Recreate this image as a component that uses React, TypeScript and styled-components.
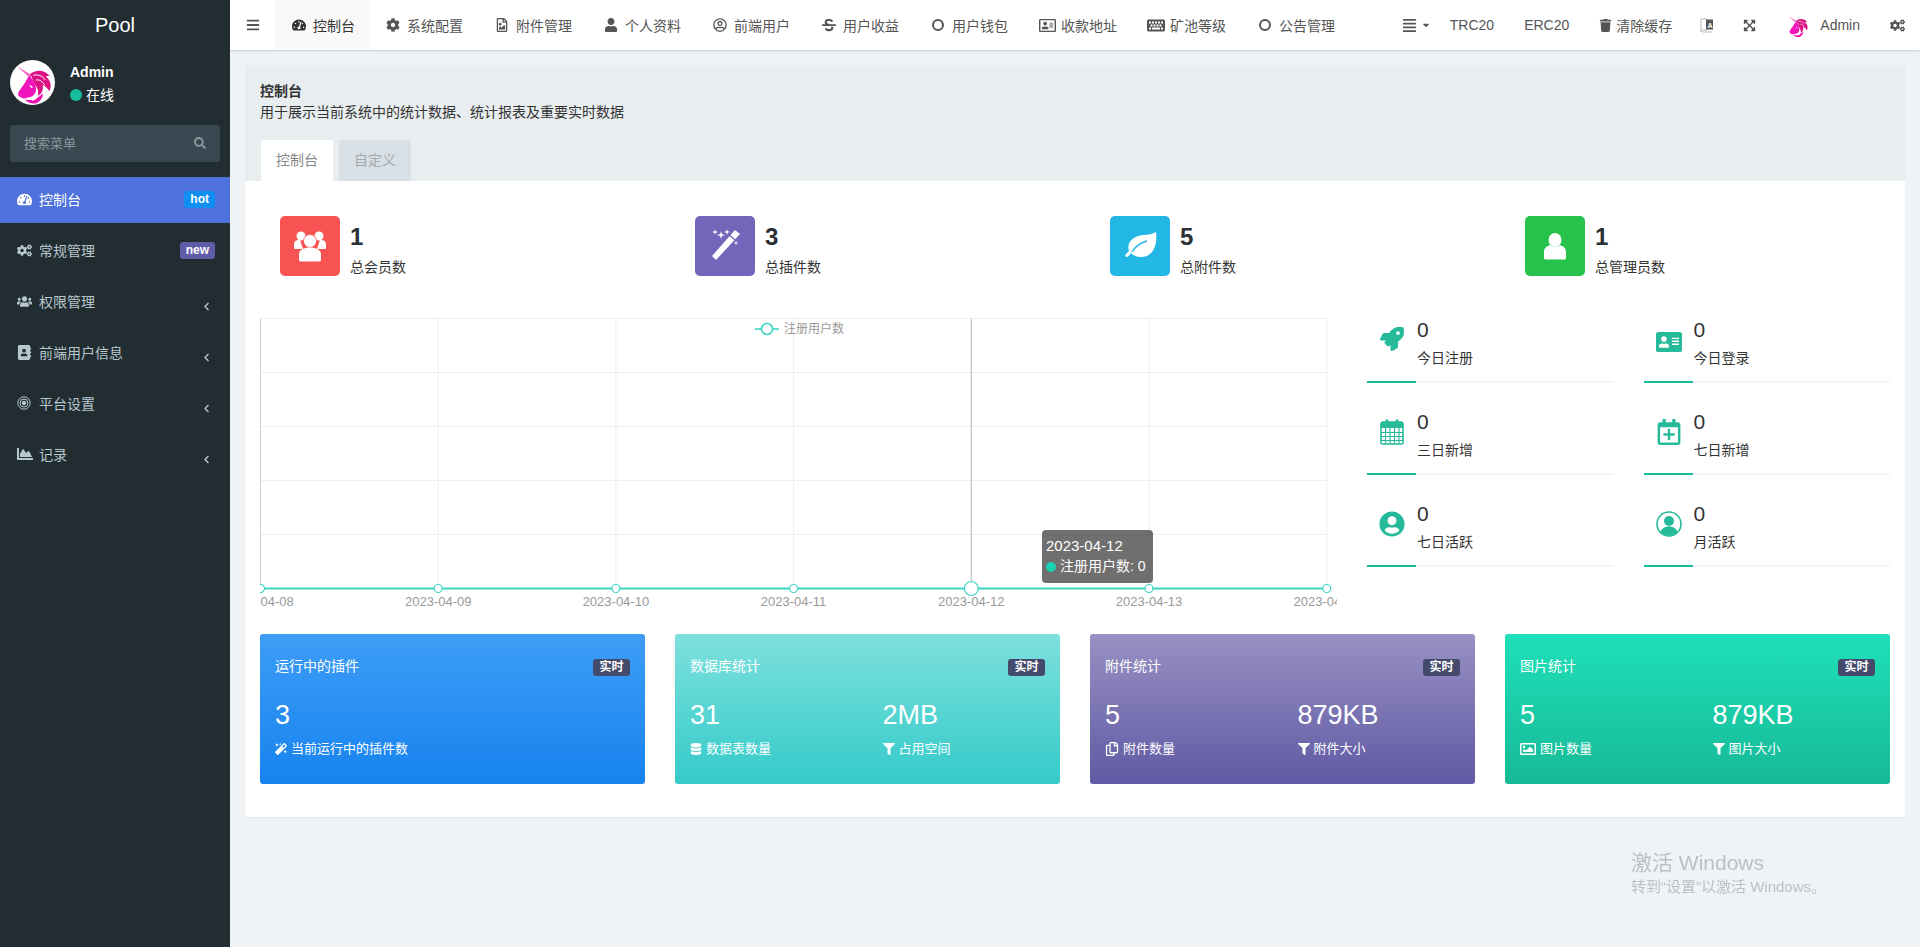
import React from "react";
import styled, { createGlobalStyle } from "styled-components";
import {
  FaAddressBook,
  FaAddressCard,
  FaAlignJustify,
  FaBars,
  FaCaretDown,
  FaChartArea,
  FaChevronLeft,
  FaCog,
  FaCogs,
  FaDatabase,
  FaExpandArrowsAlt,
  FaFilter,
  FaKeyboard,
  FaMagic,
  FaRegAddressCard,
  FaRegCalendarPlus,
  FaRegCopy,
  FaRegFileImage,
  FaRegImage,
  FaRegUserCircle,
  FaRocket,
  FaSearch,
  FaStrikethrough,
  FaTachometerAlt,
  FaTrash,
  FaUser,
  FaUserCircle,
  FaUsers,
} from "react-icons/fa";

const FONT = `"Liberation Sans", "Noto Sans CJK SC", sans-serif`;

const GlobalStyle = createGlobalStyle`
  html, body {
    margin: 0;
    padding: 0;
    height: 100%;
  }
  body {
    background: #f0f3f6;
    font-family: ${FONT};
    font-size: 14px;
    color: #333;
  }
  * {
    box-sizing: border-box;
  }
`;

const Unicorn: React.FC<{ size: number }> = ({ size }) => (
  <svg width={size} height={size} viewBox="0 0 135 135">
    <path d="M20 18 L66 46 L60 54 Z" fill="#f26bc7" />
    <path
      d="M60 42 C76 30 100 26 122 50 C118 46 112 46 108 50 C122 60 126 78 118 94 C112 84 106 78 98 76 C102 92 92 104 84 108 C86 96 84 84 76 76 C70 64 66 52 60 42 Z"
      fill="#dc1184"
    />
    <path d="M70 46 C84 42 98 48 106 60 M78 60 C88 58 98 64 104 76" fill="none" stroke="#fff" strokeWidth="3" />
    <path
      d="M58 48 C68 56 78 72 78 88 C78 100 70 110 58 112 C48 114 40 118 32 112 C24 108 22 100 28 92 C34 84 38 78 44 70 C48 62 52 54 58 48 Z"
      fill="#f014bd"
    />
    <path d="M58 74 C63 76 67 79 69 84 C64 84 60 81 58 74 Z" fill="#fff" />
    <path
      d="M44 118 C58 124 84 118 98 100 C100 112 92 124 78 130 C66 132 52 128 44 118 Z"
      fill="#ec12b2"
    />
    <path d="M62 118 C70 116 78 112 84 108 C82 116 76 120 68 122 Z" fill="#fff" />
  </svg>
);

const BigUsers = () => (
  <svg width="32" height="31" viewBox="0 0 32 31" fill="#fff">
    <circle cx="7" cy="5" r="4.5" />
    <circle cx="25" cy="5" r="4.5" />
    <path d="M0 13 C0 9.5 3 8.5 6 9 L9 18 H1 Q0 18 0 16.5 Z" />
    <path d="M32 13 C32 9.5 29 8.5 26 9 L23 18 H31 Q32 18 32 16.5 Z" />
    <circle cx="16" cy="10" r="6.5" stroke="#f75353" strokeWidth="0.8" />
    <path d="M5 29 V23 C5 19 10 16.5 16 16.5 C22 16.5 27 19 27 23 V29 Q27 30.5 25 30.5 H7 Q5 30.5 5 29 Z" />
  </svg>
);

const BigUser = () => (
  <svg width="22" height="27" viewBox="0 0 22 27" fill="#fff">
    <ellipse cx="11" cy="7" rx="6.5" ry="7" />
    <path d="M0 25 V19 C0 15 3 13 6 12 C8 14.5 14 14.5 16 12 C19 13 22 15 22 19 V25 Q22 26.5 20 26.5 H2 Q0 26.5 0 25 Z" />
  </svg>
);

const sparkle = (x: number, y: number, r: number) =>
  `M${x} ${y - r} L${x + r * 0.22} ${y - r * 0.22} L${x + r} ${y} L${x + r * 0.22} ${y + r * 0.22} L${x} ${y + r} L${x - r * 0.22} ${y + r * 0.22} L${x - r} ${y} L${x - r * 0.22} ${y - r * 0.22} Z`;

const BigMagic = () => (
  <svg width="60" height="60" viewBox="0 0 60 60">
    <path d="M40 14 L45 18 L21 44 L17 40 Z" fill="#fff" />
    <path d="M35 19.5 L40 24" stroke="#7266ba" strokeWidth="1.2" />
    <path
      d={`${sparkle(20, 16, 3)} ${sparkle(26, 19, 4)} ${sparkle(32, 16, 3)} ${sparkle(41, 27, 2.5)}`}
      fill="#fff"
    />
  </svg>
);

const BigLeaf = () => (
  <svg width="60" height="60" viewBox="0 0 60 60">
    <path
      d="M46 16 C48 30 42 42 30 41 C26 41 23 39 21 37 C19 40 18 41 17 41 C15 41 15 39 16 38 L19 35 C16 26 24 20 33 19 C38 19 43 18 46 16 Z"
      fill="#fff"
    />
    <path d="M22 36 C25 31 30 27 37 25" fill="none" stroke="#23b7e5" strokeWidth="1.4" />
  </svg>
);

const RingsIcon = () => (
  <svg width="14" height="14" viewBox="0 0 14 14" fill="none" stroke="currentColor">
    <circle cx="7" cy="7" r="6.2" />
    <circle cx="7" cy="7" r="4" />
    <circle cx="7" cy="7" r="1.8" fill="currentColor" />
  </svg>
);

const CalendarGrid = () => (
  <svg width="24" height="26" viewBox="0 0 24 26" fill="none" stroke="currentColor">
    <path d="M1 5 Q1 3 3 3 H21 Q23 3 23 5 V24 Q23 25 21 25 H3 Q1 25 1 24 Z" strokeWidth="1.6" />
    <path d="M1 3 H23 V9 H1 Z" fill="currentColor" stroke="none" />
    <path d="M7 0.5 V5 M17 0.5 V5" stroke="currentColor" strokeWidth="2.6" />
    <path d="M1 13.5 H23 M1 17.5 H23 M1 21.5 H23 M5.5 9 V25 M10 9 V25 M14.5 9 V25 M19 9 V25" strokeWidth="1.1" />
  </svg>
);

const UserRing = () => (
  <svg width="26" height="26" viewBox="0 0 26 26">
    <circle cx="13" cy="13" r="12" fill="#fff" stroke="currentColor" strokeWidth="1.6" />
    <circle cx="13" cy="10" r="5" fill="currentColor" />
    <path d="M4.5 21 C6 17 9 15.5 13 15.5 C17 15.5 20 17 21.5 21 C19 23.5 16 24.5 13 24.5 C10 24.5 7 23.5 4.5 21 Z" fill="currentColor" />
  </svg>
);

type SideItem = {
  label: string;
  icon: React.ReactNode;
  active?: boolean;
  badge?: { text: string; color: string };
};

const sideItems: SideItem[] = [
  { label: "控制台", icon: <FaTachometerAlt />, active: true, badge: { text: "hot", color: "#0f8ff2" } },
  { label: "常规管理", icon: <FaCogs />, badge: { text: "new", color: "#605ca8" } },
  { label: "权限管理", icon: <FaUsers /> },
  { label: "前端用户信息", icon: <FaAddressBook /> },
  { label: "平台设置", icon: <RingsIcon /> },
  { label: "记录", icon: <FaChartArea size={16} /> },
];

const navItems: { label: string; icon: React.ReactNode; active?: boolean }[] = [
  { label: "控制台", icon: <FaTachometerAlt />, active: true },
  { label: "系统配置", icon: <FaCog /> },
  { label: "附件管理", icon: <FaRegFileImage /> },
  { label: "个人资料", icon: <FaUser /> },
  { label: "前端用户", icon: <FaRegUserCircle /> },
  { label: "用户收益", icon: <FaStrikethrough /> },
  { label: "用户钱包", icon: <NavRingIcon /> },
  { label: "收款地址", icon: <FaRegAddressCard size={17} /> },
  { label: "矿池等级", icon: <FaKeyboard size={19} /> },
  { label: "公告管理", icon: <NavRingIcon /> },
];

const topStats = [
  { value: "1", label: "总会员数", color: "#f75353", icon: <BigUsers /> },
  { value: "3", label: "总插件数", color: "#7266ba", icon: <BigMagic /> },
  { value: "5", label: "总附件数", color: "#23b7e5", icon: <BigLeaf /> },
  { value: "1", label: "总管理员数", color: "#27c24c", icon: <BigUser /> },
];

const sideStats = [
  { label: "今日注册", icon: <FaRocket size={24} /> },
  { label: "今日登录", icon: <FaAddressCard size={30} /> },
  { label: "三日新增", icon: <CalendarGrid /> },
  { label: "七日新增", icon: <FaRegCalendarPlus size={26} /> },
  { label: "七日活跃", icon: <FaUserCircle size={26} /> },
  { label: "月活跃", icon: <UserRing /> },
];

type Metric = { value: string; label: string; icon: React.ReactNode };

const cards: { title: string; from: string; to: string; metrics: Metric[] }[] = [
  {
    title: "运行中的插件",
    from: "#3d9df6",
    to: "#1783ef",
    metrics: [{ value: "3", label: "当前运行中的插件数", icon: <FaMagic size={12} /> }],
  },
  {
    title: "数据库统计",
    from: "#7de0dd",
    to: "#34cbc9",
    metrics: [
      { value: "31", label: "数据表数量", icon: <FaDatabase size={12} /> },
      { value: "2MB", label: "占用空间", icon: <FaFilter size={12} /> },
    ],
  },
  {
    title: "附件统计",
    from: "#9891c3",
    to: "#6059a4",
    metrics: [
      { value: "5", label: "附件数量", icon: <FaRegCopy size={14} /> },
      { value: "879KB", label: "附件大小", icon: <FaFilter size={12} /> },
    ],
  },
  {
    title: "图片统计",
    from: "#1fe0b9",
    to: "#17b996",
    metrics: [
      { value: "5", label: "图片数量", icon: <FaRegImage size={16} /> },
      { value: "879KB", label: "图片大小", icon: <FaFilter size={12} /> },
    ],
  },
];

const chartDates = ["2023-04-08", "2023-04-09", "2023-04-10", "2023-04-11", "2023-04-12", "2023-04-13", "2023-04-14"];
const STEP = 177.7;
const BASE_Y = 279.5;
const TOP_Y = 9.5;
const ACTIVE_INDEX = 4;

const Chart = () => {
  const xs = chartDates.map((_, i) => 0.5 + i * STEP);
  const ys = [0, 1, 2, 3, 4, 5].map((i) => TOP_Y + i * 54);
  return (
    <ChartBox>
      <svg width="1077" height="310">
        {ys.map((y) => (
          <line key={y} x1="0" x2={xs[6]} y1={y} y2={y} stroke="#eee" />
        ))}
        {xs.map((x) => (
          <line key={x} x1={x} x2={x} y1={TOP_Y} y2={BASE_Y} stroke="#eee" />
        ))}
        <line x1="0.5" x2="0.5" y1={TOP_Y} y2={BASE_Y} stroke="#ccc" />
        <line x1={xs[ACTIVE_INDEX]} x2={xs[ACTIVE_INDEX]} y1={TOP_Y} y2={BASE_Y} stroke="#bbb" />
        <line x1="495" x2="519" y1="20" y2="20" stroke="#2fd3bc" strokeWidth="1.5" />
        <circle cx="507" cy="20" r="5.5" fill="#fff" stroke="#2fd3bc" strokeWidth="1.5" />
        <text x="524" y="24" fontSize="12" fill="#999">
          注册用户数
        </text>
        <line x1="0" x2={xs[6]} y1={BASE_Y} y2={BASE_Y} stroke="#3dd5c0" strokeWidth="2" />
        {xs.map((x, i) => (
          <circle
            key={x}
            cx={x}
            cy={BASE_Y}
            r={i === ACTIVE_INDEX ? 7 : 4}
            fill="#fff"
            stroke="#3dd5c0"
            strokeWidth="1.2"
          />
        ))}
        {chartDates.map((d, i) => (
          <text key={d} x={xs[i]} y="297" fontSize="13" fill="#999" textAnchor="middle">
            {d}
          </text>
        ))}
      </svg>
      <ChartTip>
        <ChartTipDate>2023-04-12</ChartTipDate>
        <ChartTipRow>
          <ChartTipDot />
          注册用户数: 0
        </ChartTipRow>
      </ChartTip>
    </ChartBox>
  );
};

const App: React.FC = () => {
  return (
    <Page>
      <GlobalStyle />
      <Sidebar>
        <Logo>Pool</Logo>
        <UserPanel>
          <Avatar>
            <Unicorn size={45} />
          </Avatar>
          <UserInfo>
            <UserName>Admin</UserName>
            <UserStatus>
              <StatusDot />
              在线
            </UserStatus>
          </UserInfo>
        </UserPanel>
        <SearchBox>
          <span>搜索菜单</span>
          <FaSearch size={12} />
        </SearchBox>
        <SideMenu>
          {sideItems.map((item) => (
            <SideRow key={item.label} $active={item.active}>
              <SideIcon>{item.icon}</SideIcon>
              <SideLabel>{item.label}</SideLabel>
              {item.badge ? (
                <SideBadge $color={item.badge.color}>{item.badge.text}</SideBadge>
              ) : (
                <SideArrow>
                  <FaChevronLeft size={9} />
                </SideArrow>
              )}
            </SideRow>
          ))}
        </SideMenu>
      </Sidebar>
      <Main>
        <Header>
          <ToggleButton>
            <FaBars size={14} />
          </ToggleButton>
          {navItems.map((item) => (
            <NavItem key={item.label} $active={item.active}>
              <NavIcon>{item.icon}</NavIcon>
              {item.label}
            </NavItem>
          ))}
          <HeaderRight>
            <ListButton>
              <FaAlignJustify size={15} />
              <FaCaretDown size={10} />
            </ListButton>
            <HeaderLink>TRC20</HeaderLink>
            <HeaderLink>ERC20</HeaderLink>
            <CacheLink>
              <FaTrash size={13} />
              清除缓存
            </CacheLink>
            <HeaderIcon>
              <svg width="14" height="17" viewBox="0 0 14 17">
                <path d="M1 2 H7 V13 H3 L1 15 Z" fill="#fff" stroke="#b5b5b5" />
                <rect x="6" y="2.5" width="7" height="10" fill="#555" />
                <path d="M2.5 15 H12" stroke="#bbb" />
                <text x="7.5" y="10.5" fontSize="7" fontWeight="bold" fill="#fff">
                  A
                </text>
              </svg>
            </HeaderIcon>
            <HeaderIcon>
              <FaExpandArrowsAlt size={13} />
            </HeaderIcon>
            <HeaderUser>
              <Unicorn size={25} />
              Admin
            </HeaderUser>
            <HeaderIcon $wide>
              <FaCogs size={15} />
            </HeaderIcon>
          </HeaderRight>
        </Header>
        <Content>
          <Panel>
            <PanelHead>
              <PanelTitle>控制台</PanelTitle>
              <PanelDesc>用于展示当前系统中的统计数据、统计报表及重要实时数据</PanelDesc>
              <Tabs>
                <Tab $active>控制台</Tab>
                <Tab>自定义</Tab>
              </Tabs>
            </PanelHead>
            <PanelBody>
              <TopStats>
                {topStats.map((s) => (
                  <TopStat key={s.label}>
                    <TopStatIcon $color={s.color}>{s.icon}</TopStatIcon>
                    <div>
                      <TopStatValue>{s.value}</TopStatValue>
                      <TopStatLabel>{s.label}</TopStatLabel>
                    </div>
                  </TopStat>
                ))}
              </TopStats>
              <ChartRow>
                <Chart />
                <SideStats>
                  {sideStats.map((s) => (
                    <SideStat key={s.label}>
                      <SideStatMain>
                        <SideStatIcon>{s.icon}</SideStatIcon>
                        <div>
                          <SideStatValue>0</SideStatValue>
                          <SideStatLabel>{s.label}</SideStatLabel>
                        </div>
                      </SideStatMain>
                      <SideStatBar>
                        <SideStatBarFill />
                      </SideStatBar>
                    </SideStat>
                  ))}
                </SideStats>
              </ChartRow>
              <CardGrid>
                {cards.map((c) => (
                  <Card key={c.title} $from={c.from} $to={c.to}>
                    <CardHead>
                      <CardTitle>{c.title}</CardTitle>
                      <CardBadge>实时</CardBadge>
                    </CardHead>
                    <CardMetrics>
                      {c.metrics.map((m) => (
                        <div key={m.label}>
                          <CardValue>{m.value}</CardValue>
                          <CardLabel>
                            {m.icon}
                            {m.label}
                          </CardLabel>
                        </div>
                      ))}
                    </CardMetrics>
                  </Card>
                ))}
              </CardGrid>
            </PanelBody>
          </Panel>
        </Content>
      </Main>
      <Watermark>
        <WatermarkTitle>激活 Windows</WatermarkTitle>
        <WatermarkText>转到“设置”以激活 Windows。</WatermarkText>
      </Watermark>
    </Page>
  );
};

function NavRingIcon() {
  return <NavRing />;
}

const NavRing = styled.i`
  display: block;
  width: 12px;
  height: 12px;
  border: 2.5px solid #555;
  border-radius: 50%;
`;

const Page = styled.div`
  display: flex;
  height: 947px;
  overflow: hidden;
`;

const Sidebar = styled.aside`
  width: 230px;
  flex-shrink: 0;
  background: #222d32;
`;

const Logo = styled.div`
  height: 50px;
  line-height: 50px;
  text-align: center;
  font-size: 20px;
  color: #fff;
`;

const UserPanel = styled.div`
  display: flex;
  padding: 10px;
  gap: 15px;
`;

const Avatar = styled.div`
  width: 45px;
  height: 45px;
  border-radius: 50%;
  background: #fff;
  overflow: hidden;
`;

const UserInfo = styled.div`
  color: #fff;
  padding-top: 3px;
`;

const UserName = styled.div`
  font-weight: 700;
  font-size: 14px;
  line-height: 18px;
`;

const UserStatus = styled.div`
  display: flex;
  align-items: center;
  gap: 4px;
  margin-top: 5px;
  line-height: 18px;
  font-size: 14px;
`;

const StatusDot = styled.i`
  display: block;
  width: 12px;
  height: 12px;
  border-radius: 50%;
  background: #18bc9c;
`;

const SearchBox = styled.div`
  display: flex;
  align-items: center;
  justify-content: space-between;
  height: 37px;
  margin: 10px 10px 15px;
  padding: 0 14px 2px;
  border-radius: 3px;
  background: #374850;
  color: #8b979d;
  font-size: 13px;
`;

const SideMenu = styled.nav`
  display: flex;
  flex-direction: column;
  gap: 5px;
`;

const SideRow = styled.div<{ $active?: boolean }>`
  display: flex;
  align-items: center;
  height: 46px;
  padding: 0 15px 2px 17px;
  color: ${({ $active }) => ($active ? "#fff" : "#b8c7ce")};
  background: ${({ $active }) => ($active ? "#4e71dd" : "transparent")};
`;

const SideIcon = styled.span`
  display: flex;
  width: 22px;
  font-size: 15px;
`;

const SideLabel = styled.span`
  flex: 1;
  font-size: 14px;
`;

const SideBadge = styled.span<{ $color: string }>`
  height: 17px;
  line-height: 16px;
  padding: 0 6px;
  border-radius: 3px;
  font-size: 12px;
  font-weight: 700;
  color: #fff;
  background: ${({ $color }) => $color};
`;

const SideArrow = styled.span`
  display: flex;
  margin: 11px 4px 0 0;
`;

const Main = styled.div`
  flex: 1;
  min-width: 0;
  display: flex;
  flex-direction: column;
`;

const Header = styled.header`
  display: flex;
  align-items: stretch;
  height: 50px;
  flex-shrink: 0;
  background: #fff;
  box-shadow: 0 1px 2px rgba(0, 0, 0, 0.16);
  color: #555;
  font-size: 14px;
  white-space: nowrap;
`;

const ToggleButton = styled.div`
  display: flex;
  align-items: center;
  justify-content: center;
  width: 45px;
`;

const NavItem = styled.div<{ $active?: boolean }>`
  display: flex;
  align-items: center;
  padding: ${({ $active }) => ($active ? "0 14px 0 15px" : "0 15px")};
  color: ${({ $active }) => ($active ? "#333" : "#555")};
  background: ${({ $active }) => ($active ? "#f9f9f9" : "transparent")};
`;

const NavIcon = styled.span`
  display: flex;
  justify-content: center;
  width: 18px;
  margin-right: 5px;
  font-size: 14px;
`;

const HeaderRight = styled.div`
  display: flex;
  align-items: center;
  margin-left: auto;
`;

const ListButton = styled.div`
  display: flex;
  align-items: center;
  gap: 4px;
  padding-right: 4px;
`;

const HeaderLink = styled.div`
  padding: 0 15px;
`;

const CacheLink = styled.div`
  display: flex;
  align-items: center;
  gap: 4px;
  padding: 0 14px 0 15px;
`;

const HeaderIcon = styled.div<{ $wide?: boolean }>`
  display: flex;
  align-items: center;
  justify-content: center;
  width: ${({ $wide }) => ($wide ? "46px" : "42px")};
`;

const HeaderUser = styled.div`
  display: flex;
  align-items: center;
  gap: 10px;
  margin-left: 15px;
  margin-right: 14px;
`;

const Content = styled.main`
  padding: 15px;
`;

const Panel = styled.section`
  border-radius: 3px;
  background: #fff;
  box-shadow: 0 1px 1px rgba(0, 0, 0, 0.05);
`;

const PanelHead = styled.div`
  height: 116px;
  padding: 16px 15px 0;
  background: #e8edf0;
`;

const PanelTitle = styled.div`
  font-weight: 700;
  font-size: 14px;
  line-height: 20px;
`;

const PanelDesc = styled.div`
  font-size: 14px;
  line-height: 22px;
`;

const Tabs = styled.div`
  display: flex;
  gap: 6px;
  margin: 17px 0 0 1px;
`;

const Tab = styled.div<{ $active?: boolean }>`
  width: 72px;
  height: 41px;
  line-height: 41px;
  text-align: center;
  border-radius: 3px 3px 0 0;
  font-size: 14px;
  color: ${({ $active }) => ($active ? "#888" : "#a3abb1")};
  background: ${({ $active }) => ($active ? "#fff" : "#d8dfe5")};
`;

const PanelBody = styled.div`
  padding: 35px 15px 33px;
`;

const TopStats = styled.div`
  display: grid;
  grid-template-columns: repeat(4, 415px);
  margin: 0 -15px;
`;

const TopStat = styled.div`
  display: flex;
  gap: 10px;
  padding-left: 35px;
`;

const TopStatIcon = styled.div<{ $color: string }>`
  display: flex;
  align-items: center;
  justify-content: center;
  width: 60px;
  height: 60px;
  border-radius: 5px;
  background: ${({ $color }) => $color};
`;

const TopStatValue = styled.div`
  height: 32px;
  padding-top: 5px;
  line-height: 32px;
  font-size: 24px;
  font-weight: 700;
  color: #2b2f36;
`;

const TopStatLabel = styled.div`
  margin-top: 9px;
  line-height: 20px;
  font-size: 14px;
`;

const ChartRow = styled.div`
  display: flex;
  height: 325px;
  margin-top: 32px;
`;

const ChartBox = styled.div`
  position: relative;
  width: 1077px;
  height: 310px;
  flex-shrink: 0;

  svg {
    display: block;
  }
`;

const ChartTip = styled.div`
  position: absolute;
  left: 782px;
  top: 221px;
  width: 111px;
  height: 53px;
  padding: 5px 4px;
  border-radius: 4px;
  background: rgba(50, 50, 50, 0.7);
  color: #fff;
  line-height: 21px;
`;

const ChartTipDate = styled.div`
  font-size: 15px;
`;

const ChartTipRow = styled.div`
  display: flex;
  align-items: center;
  gap: 4px;
  white-space: nowrap;
  font-size: 14px;
`;

const ChartTipDot = styled.i`
  display: block;
  width: 10px;
  height: 10px;
  border-radius: 50%;
  background: #1bd1b4;
`;

const SideStats = styled.div`
  display: grid;
  grid-template-columns: repeat(2, 246.5px);
  grid-auto-rows: 92px;
  column-gap: 30px;
  margin: 8px 0 0 30px;
`;

const SideStat = styled.div`
  display: flex;
  flex-direction: column;
`;

const SideStatMain = styled.div`
  display: flex;
  gap: 12px;
  height: 64px;
`;

const SideStatIcon = styled.span`
  display: flex;
  justify-content: center;
  width: 38px;
  padding: 10px 0 0 12px;
  color: #26ba9a;
`;

const SideStatValue = styled.div`
  line-height: 26px;
  font-size: 21px;
  color: #333;
`;

const SideStatLabel = styled.div`
  margin-top: 5px;
  line-height: 20px;
  font-size: 14px;
`;

const SideStatBar = styled.div`
  height: 2px;
  background: #f3f4f5;
`;

const SideStatBarFill = styled.div`
  width: 20%;
  height: 100%;
  background: #18bc9c;
`;

const CardGrid = styled.div`
  display: grid;
  grid-template-columns: repeat(4, 385px);
  gap: 30px;
`;

const Card = styled.div<{ $from: string; $to: string }>`
  height: 150px;
  padding: 25px 15px 0;
  border-radius: 3px;
  color: #fff;
  background: linear-gradient(to bottom, ${({ $from }) => $from}, ${({ $to }) => $to});
`;

const CardHead = styled.div`
  display: flex;
  align-items: center;
  justify-content: space-between;
  height: 17px;
  font-size: 14px;
`;

const CardTitle = styled.span`
  padding-bottom: 6px;
`;

const CardBadge = styled.span`
  width: 37px;
  height: 17px;
  line-height: 17px;
  text-align: center;
  border-radius: 3px;
  font-size: 12px;
  font-weight: 700;
  background: #434a6b;
`;

const CardMetrics = styled.div`
  display: grid;
  grid-template-columns: 192.5px 1fr;
  margin-top: 24px;
`;

const CardValue = styled.div`
  height: 30px;
  line-height: 30px;
  font-size: 27px;
`;

const CardLabel = styled.div`
  display: flex;
  align-items: center;
  gap: 4px;
  margin-top: 10px;
  line-height: 18px;
  font-size: 13px;
`;

const Watermark = styled.div`
  position: fixed;
  left: 1631px;
  top: 850px;
  color: #bdc0c2;
  pointer-events: none;
`;

const WatermarkTitle = styled.div`
  font-size: 21px;
  line-height: 26px;
`;

const WatermarkText = styled.div`
  margin-top: 1px;
  font-size: 15px;
  line-height: 20px;
`;

export default App;
